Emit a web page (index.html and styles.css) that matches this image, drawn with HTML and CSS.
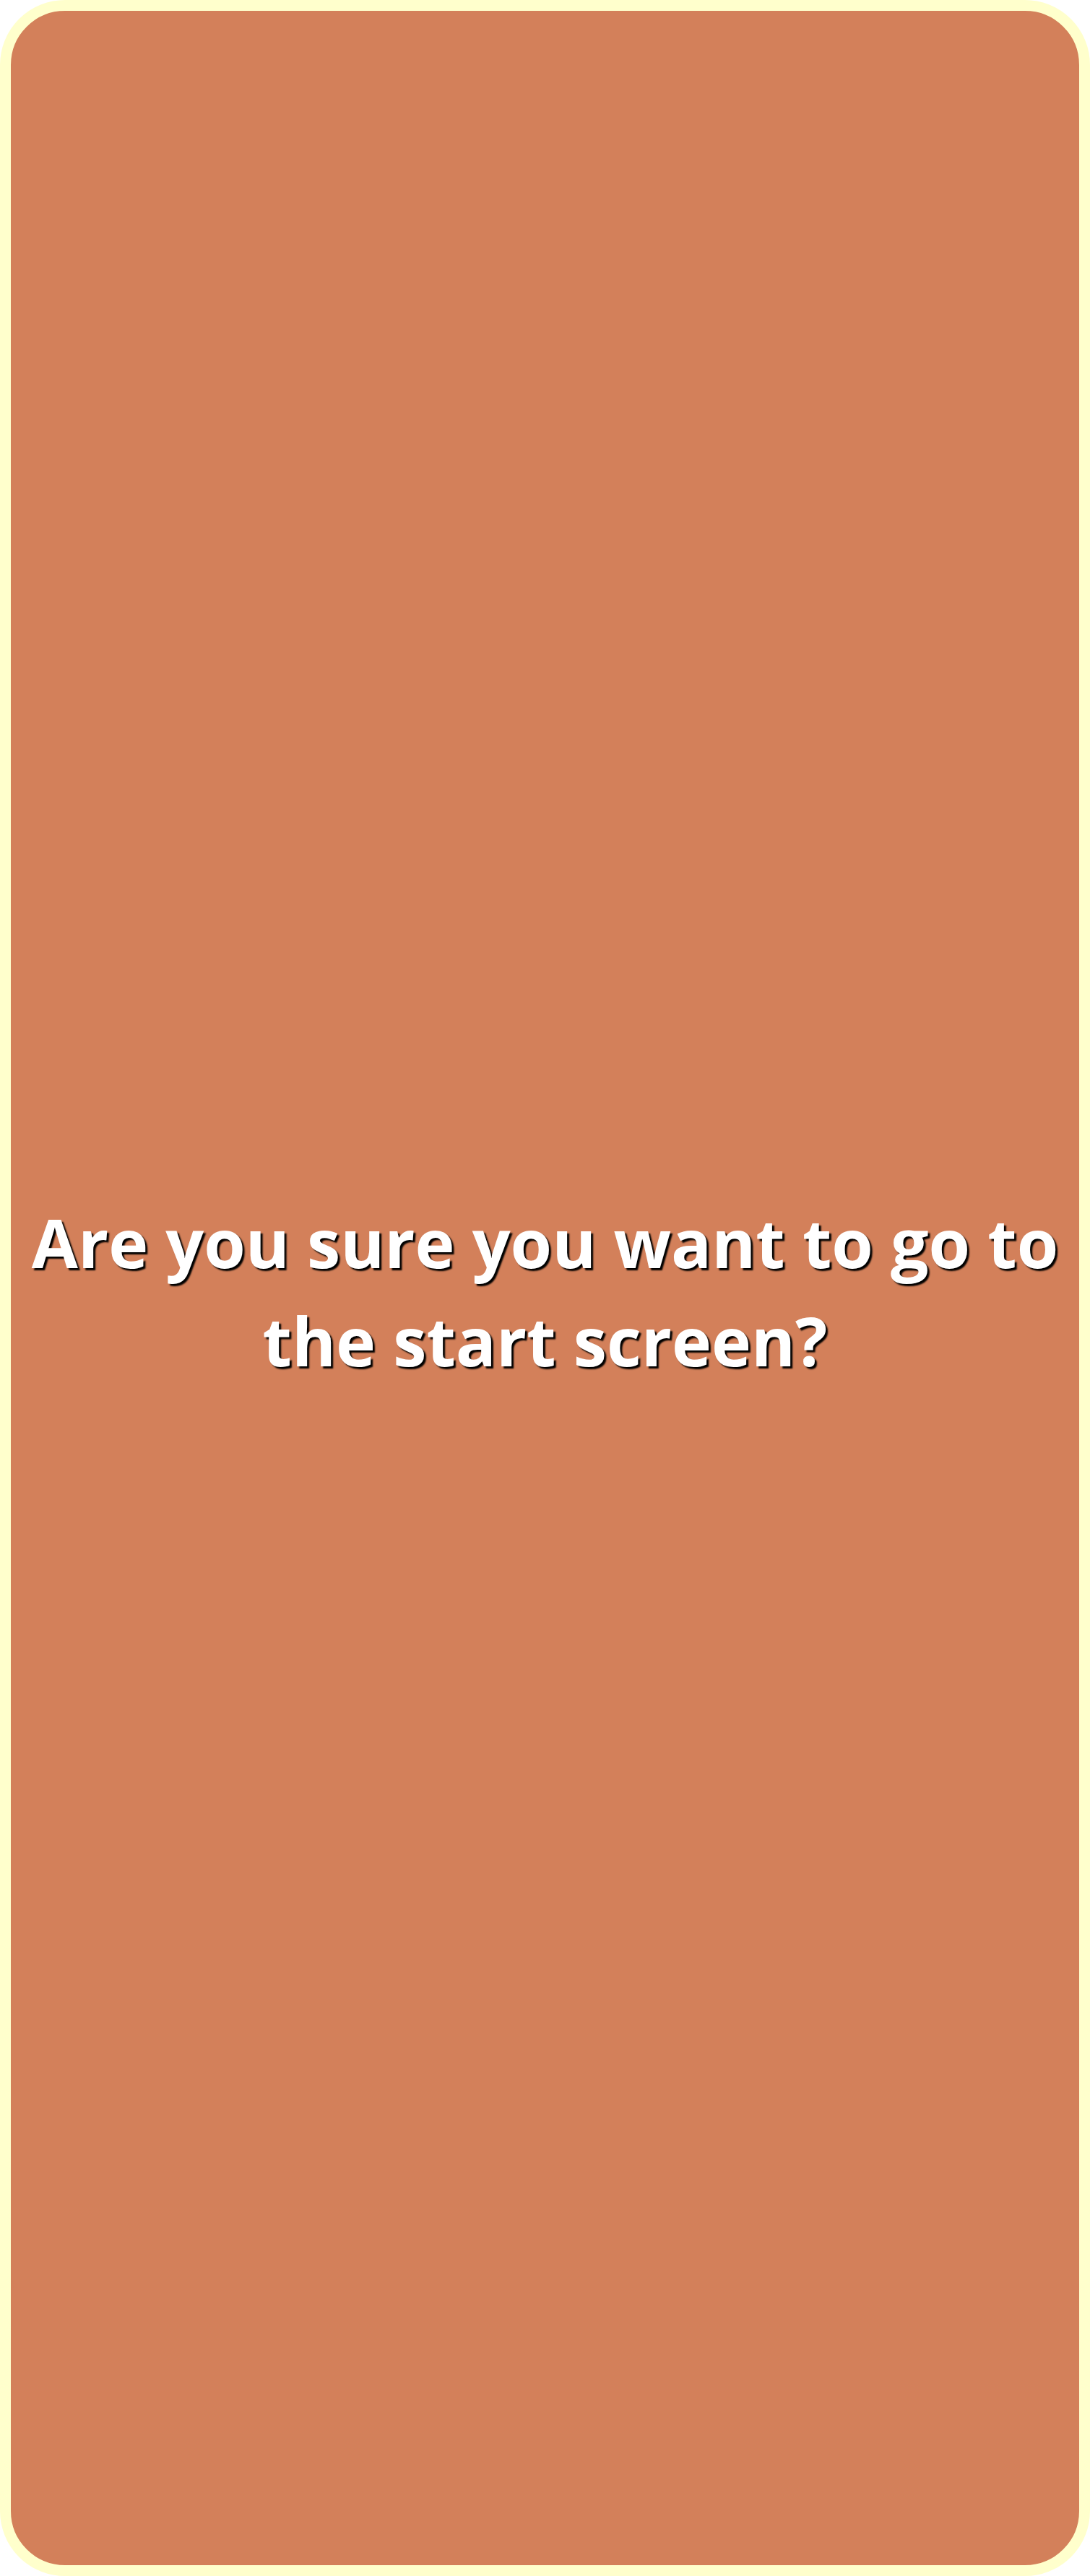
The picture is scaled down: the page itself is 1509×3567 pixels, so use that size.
FILE: index.html
```html
<!DOCTYPE html>
<html lang="en">
<head>
<meta charset="utf-8">
<title>Confirm</title>
<link rel="stylesheet" href="styles.css">
</head>
<body>
<div class="frame">
  <p class="question">Are you sure you want to go to<br>the start screen?</p>
</div>
</body>
</html>
```
FILE: styles.css
```css
html, body {
  margin: 0;
  padding: 0;
  background: #ffffff;
}
.frame {
  box-sizing: border-box;
  width: 1509px;
  height: 3567px;
  border: 15px solid #ffffcc;
  border-radius: 90px;
  background: #d3805a;
  display: flex;
  align-items: center;
  justify-content: center;
}
.question {
  margin: 0;
  padding-top: 8px;
  font-family: "Open Sans", Lato, sans-serif;
  font-weight: 700;
  font-size: 93px;
  line-height: 136px;
  color: #ffffff;
  text-align: center;
  text-shadow: 3px 3px 2px #000000;
}
```
